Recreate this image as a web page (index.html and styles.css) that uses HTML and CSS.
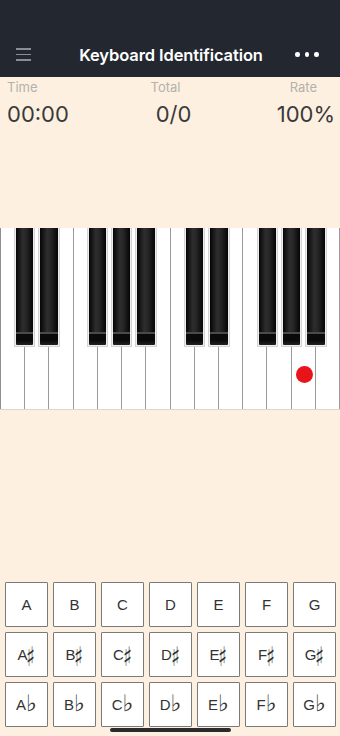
FILE: index.html
```html
<!DOCTYPE html>
<html>
<head>
<meta charset="utf-8">
<link rel="stylesheet" href="styles.css">
</head>
<body>
<div class="app">
  <header class="topbar">
    <div class="menu">
      <span></span><span></span><span></span>
    </div>
    <div class="title">Keyboard Identification</div>
    <div class="more"><i></i><i></i><i></i></div>
  </header>

  <section class="stats">
    <div class="stat left"><div class="label">Time</div><div class="value">00:00</div></div>
    <div class="stat center"><div class="label">Total</div><div class="value">0/0</div></div>
    <div class="stat right"><div class="label">Rate</div><div class="value">100%</div></div>
  </section>

  <section class="piano">
    <div class="whites">
      <div class="wk"></div><div class="wk"></div><div class="wk"></div><div class="wk"></div>
      <div class="wk"></div><div class="wk"></div><div class="wk"></div><div class="wk"></div>
      <div class="wk"></div><div class="wk"></div><div class="wk"></div><div class="wk"></div>
      <div class="wk"><span class="dot"></span></div><div class="wk"></div>
    </div>
    <div class="bk" style="left:13.8px"></div>
    <div class="bk" style="left:38.1px"></div>
    <div class="bk" style="left:86.6px"></div>
    <div class="bk" style="left:110.9px"></div>
    <div class="bk" style="left:135.2px"></div>
    <div class="bk" style="left:183.8px"></div>
    <div class="bk" style="left:208.1px"></div>
    <div class="bk" style="left:256.6px"></div>
    <div class="bk" style="left:280.9px"></div>
    <div class="bk" style="left:305.2px"></div>
  </section>

  <section class="answers">
    <button class="key">A</button><button class="key">B</button><button class="key">C</button><button class="key">D</button><button class="key">E</button><button class="key">F</button><button class="key">G</button>
    <button class="key">A<span class="acc sharp">♯</span></button><button class="key">B<span class="acc sharp">♯</span></button><button class="key">C<span class="acc sharp">♯</span></button><button class="key">D<span class="acc sharp">♯</span></button><button class="key">E<span class="acc sharp">♯</span></button><button class="key">F<span class="acc sharp">♯</span></button><button class="key">G<span class="acc sharp">♯</span></button>
    <button class="key">A<span class="acc flat">♭</span></button><button class="key">B<span class="acc flat">♭</span></button><button class="key">C<span class="acc flat">♭</span></button><button class="key">D<span class="acc flat">♭</span></button><button class="key">E<span class="acc flat">♭</span></button><button class="key">F<span class="acc flat">♭</span></button><button class="key">G<span class="acc flat">♭</span></button>
  </section>

  <div class="home"></div>
</div>
</body>
</html>
```

FILE: styles.css
```css
* { box-sizing: border-box; }
html, body {
  margin: 0;
  padding: 0;
  background: #fdf0e1;
}
.app {
  width: 340px;
  height: 736px;
  position: relative;
  overflow: hidden;
  font-family: Inter, "Noto Sans", sans-serif;
}
.topbar {
  height: 77px;
  background: #232830;
  display: flex;
  align-items: center;
  padding: 32px 0 0 0;
  position: relative;
}
.menu {
  width: 47px;
  padding-left: 16px;
  display: flex;
  flex-direction: column;
  gap: 4px;
}
.menu span {
  display: block;
  width: 15px;
  height: 1.5px;
  background: #8a8d92;
}
.title {
  flex: 1;
  text-align: center;
  color: #fff;
  font-size: 16.5px;
  font-weight: 600;
  letter-spacing: -0.1px;
  padding-left: 2px;
}
.more {
  width: 47px;
  display: flex;
  gap: 5px;
  padding-left: 2px;
}
.more i {
  display: block;
  width: 4.5px;
  height: 4.5px;
  border-radius: 50%;
  background: #fff;
}
.stats {
  display: grid;
  grid-template-columns: 1fr 1fr 1fr;
  padding: 2px 5px 0 7px;
  height: 151px;
}
.stat { display: flex; flex-direction: column; }
.stat.center { align-items: center; padding-left: 5px; }
.stat.right { align-items: flex-end; }
.label {
  font-size: 13px;
  color: #b4b0ab;
  line-height: 16px;
}
.stat.center .label { padding-right: 16px; }
.stat.right .label { padding-right: 18px; }
.value {
  font-size: 22px;
  color: #3a3a3a;
  line-height: 26px;
  margin-top: 6px;
}
.piano {
  position: relative;
  height: 182px;
  border-bottom: 1px solid #ddd6cc;
}
.whites {
  display: flex;
  height: 181px;
  border-left: 1px solid #8e8e8e;
  background: #fff;
}
.wk {
  flex: 1;
  background: #fff;
  border-right: 1.5px solid #9a9a9a;
  position: relative;
}
.dot {
  position: absolute;
  left: 4px;
  top: 138px;
  width: 17px;
  height: 17px;
  border-radius: 50%;
  background: #e8141a;
}
.bk {
  position: absolute;
  top: 0;
  width: 21.5px;
  height: 119px;
  border: 1px solid #d4d4d4;
  border-top: none;
  background: #eee;
  padding: 0 1px 1px 1px;
}
.bk::before {
  content: "";
  display: block;
  height: 100%;
  background:
    linear-gradient(to bottom, transparent 89%, #4a4a4a 89%, #4a4a4a 90.5%, #0a0a0a 90.5%, #0a0a0a 96%, #222 100%),
    linear-gradient(to right, #050505 0%, #2e2e2e 40%, #262626 60%, #050505 100%);
  border-radius: 0 0 1px 1px;
}
.answers {
  position: absolute;
  left: 5px;
  top: 582px;
  display: grid;
  grid-template-columns: repeat(7, 43px);
  grid-auto-rows: 45px;
  column-gap: 5px;
  row-gap: 5px;
}
.key {
  margin: 0;
  padding: 0;
  background: #fff;
  border: 1.5px solid #7a7a7a;
  border-radius: 1px;
  font-family: "Liberation Sans", Arial, sans-serif;
  font-size: 15px;
  line-height: 1;
  color: #333;
  display: flex;
  align-items: center;
  justify-content: center;
}
.acc {
  font-family: "DejaVu Sans", sans-serif;
  position: relative;
  line-height: 1;
  display: inline-block;
}
.acc.sharp {
  font-size: 27px;
  top: 2px;
  transform: scaleX(0.7);
  margin-left: -3px;
  margin-right: -2px;
}
.acc.flat {
  font-size: 23px;
  top: -1px;
  margin-left: 0;
}
.home {
  position: absolute;
  left: 110px;
  top: 728px;
  width: 121px;
  height: 3.5px;
  border-radius: 2px;
  background: #2b2b2b;
}
```
